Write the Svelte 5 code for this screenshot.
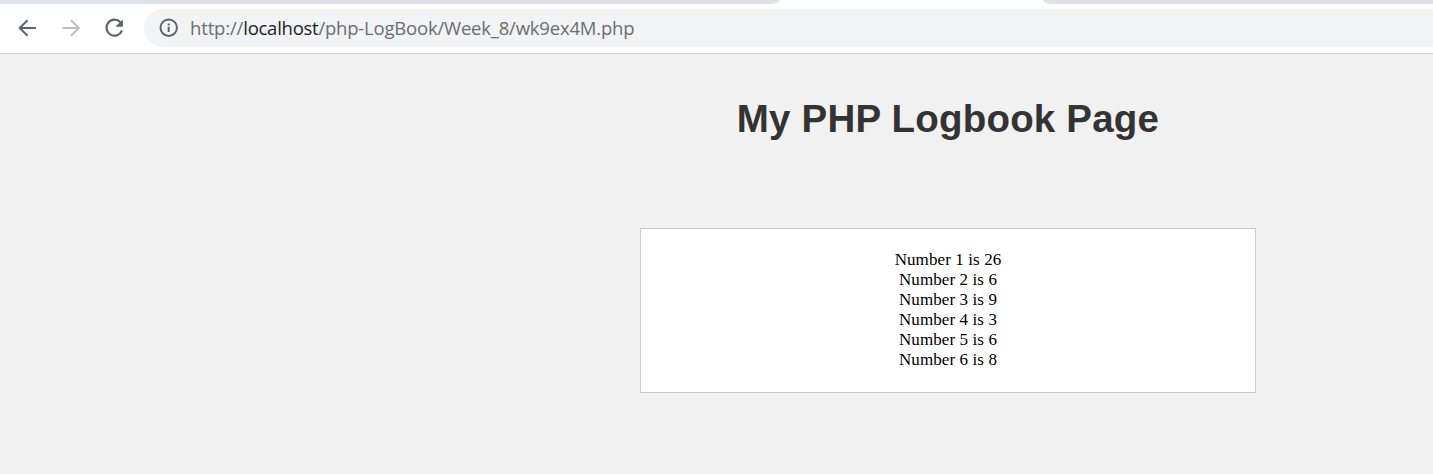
<script>
  const numbers = [26, 6, 9, 3, 6, 8];
</script>

<div class="window">
  <div class="tabs">
    <div class="tab left"></div>
    <div class="tab right"></div>
  </div>
  <div class="toolbar">
    <svg class="nav" width="24" height="24" viewBox="0 0 24 24" fill="none" stroke="#5f6368" stroke-width="2"><path d="M21 12H5M12.5 4.2L4.7 12l7.8 7.8" /></svg>
    <svg class="nav" width="24" height="24" viewBox="0 0 24 24" fill="none" stroke="#bcbec0" stroke-width="2"><path d="M3.5 12h16M12 4.2l7.8 7.8-7.8 7.8" /></svg>
    <svg class="nav" width="24" height="24" viewBox="0 0 24 24"><path fill="none" stroke="#5f6368" stroke-width="2.1" d="M18.4 6.2A8 8 0 1 0 20 14.5" /><path fill="#5f6368" d="M20.8 3.4v7.4h-7.4z" /></svg>
    <div class="address">
      <svg class="info" width="20" height="20" viewBox="0 0 20 20"><circle cx="9.7" cy="9.7" r="8.2" fill="none" stroke="#5f6368" stroke-width="2" /><path fill="#5f6368" d="M8.7 5.4h2v2h-2zM8.7 8.8h2V14h-2z" /></svg>
      <div class="url"><span class="scheme">http://</span><span class="host">localhost</span><span class="path">/php-LogBook/Week_8/wk9ex4M.php</span></div>
    </div>
  </div>
  <main>
    <h1>My PHP Logbook Page</h1>
    <section>
      {#each numbers as value, i}
        <div class="row">Number {i + 1} is {value}</div>
      {/each}
    </section>
  </main>
</div>

<style>
  :global(body) { overflow: hidden; }
  .window { width: 1433px; height: 474px; overflow: hidden; background: #f1f1f1; display: flex; flex-direction: column; }
  .tabs { height: 4px; flex: none; display: flex; justify-content: space-between; background: #fff; }
  .tab { height: 4px; background: #dee1e6; }
  .left { width: 780px; border-bottom-right-radius: 10px 4px; }
  .right { width: 390px; border-bottom-left-radius: 10px 4px; }
  .toolbar { box-sizing: border-box; height: 50px; flex: none; padding: 5px 0 6px 15px; display: flex; align-items: center; background: #fff; border-bottom: 1px solid #d6d8da; }
  .nav { flex: none; margin-right: 20px; }
  .nav:nth-child(2) { margin-right: 19px; }
  .nav:nth-child(3) { margin-right: 18px; }
  .address { flex: 1; height: 38px; background: #f1f3f4; border-radius: 19px 0 0 19px; display: flex; align-items: center; padding-left: 15px; }
  .info { flex: none; margin-right: 11px; }
  .url { font: 18.5px/38px "Open Sans", sans-serif; color: #6b6e72; white-space: nowrap; display: flex; }
  .scheme { letter-spacing: -0.15px; }
  .host { color: #202124; letter-spacing: -0.26px; }
  .path { letter-spacing: -0.2px; }
  main { display: flex; flex-direction: column; align-items: center; padding-left: 463px; }
  h1 { margin: 42px 0 0; font: bold 38.5px/46px "Liberation Sans", Arial, sans-serif; letter-spacing: 0.2px; color: #333; white-space: nowrap; }
  section { box-sizing: border-box; width: 616px; height: 165px; margin-top: 86px; padding-top: 21px; background: #fff; border: 1px solid #ccc; text-align: center; }
  .row { font: 17px/20px "Liberation Serif", "Times New Roman", serif; letter-spacing: 0.1px; color: #000; }
</style>
